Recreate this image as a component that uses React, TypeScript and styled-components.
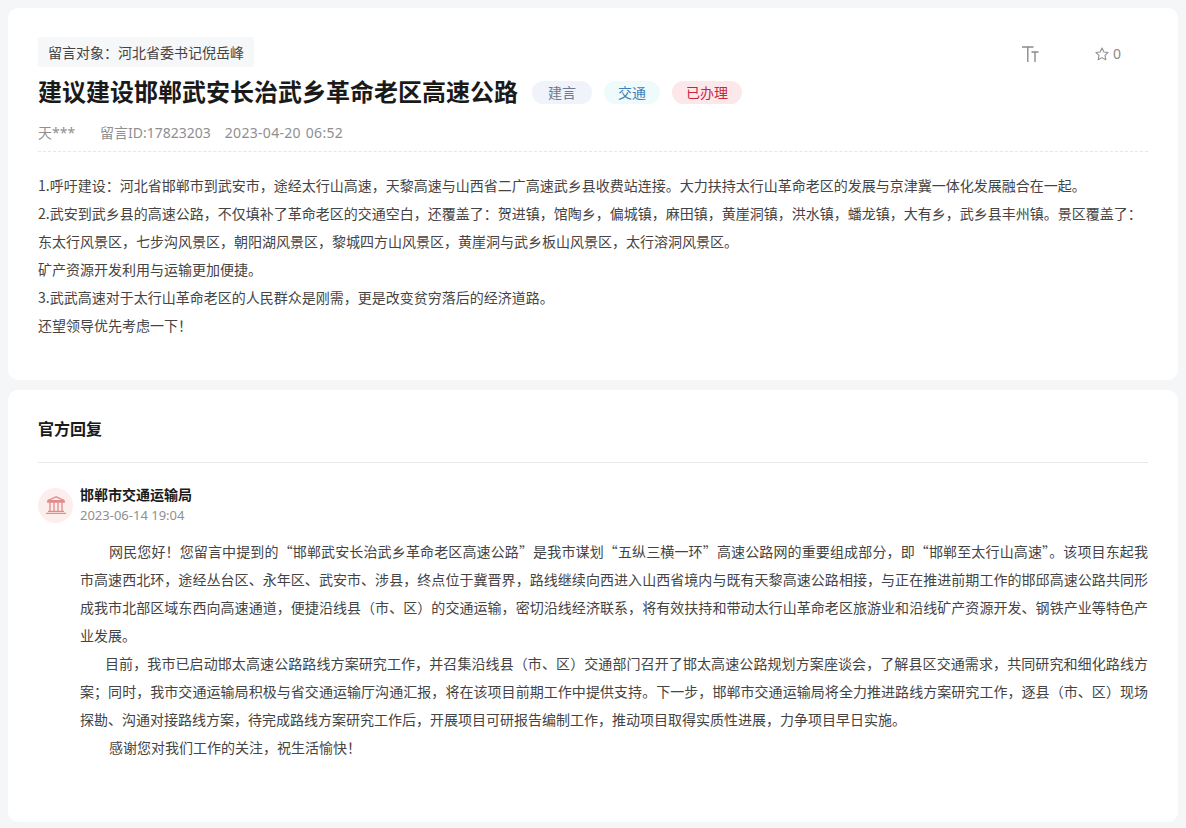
import React from "react";
import styled, { createGlobalStyle } from "styled-components";

const Global = createGlobalStyle`
  html, body { margin: 0; padding: 0; background: #f5f6f8; }
  body { font-family: "Noto Sans CJK SC", "Noto Sans", sans-serif; color: #333; }
`;
const Page = styled.div`
  width: 1170px; margin: 0 8px; padding-top: 8px;
  display: flex; flex-direction: column; gap: 10px;
`;
const Card = styled.section<{ $h: number }>`
  background: #fff; border-radius: 10px; height: ${p => p.$h}px;
  box-sizing: border-box; padding: 0 30px; overflow: hidden;
`;
const TopRow = styled.div`
  display: flex; justify-content: space-between; align-items: flex-start; padding-top: 29px;
`;
const Target = styled.div`
  background: #f6f7f9; border-radius: 2px; height: 30px; line-height: 30px; padding: 0 10px;
  font-size: 14px; color: #444; box-sizing: border-box;
`;
const Tools = styled.div`
  display: flex; align-items: center; height: 34px; color: #888;
`;
const FontTool = styled.svg`
  width: 18px; height: 16px; margin-right: 54px; margin-top: -1px;
`;
const Fav = styled.div`
  display: flex; align-items: center; gap: 3px; font-family: "Noto Sans", sans-serif;
  font-size: 14px; line-height: 20px; color: #888; margin-right: 27px;
`;
const TitleRow = styled.div`
  display: flex; align-items: center; margin-top: 2px; height: 38px;
`;
const Title = styled.h1`
  margin: 0 0 2px; font-size: 24px; font-weight: 700; color: #1a1a1a; line-height: 36px;
`;
const Tag = styled.span<{ $bg: string; $fg: string; $w: number; $ml: number }>`
  display: inline-flex; justify-content: center; align-items: center;
  width: ${p => p.$w}px; margin-left: ${p => p.$ml}px; height: 23px; border-radius: 12px;
  background: ${p => p.$bg}; color: ${p => p.$fg}; font-size: 14px; line-height: 23px;
`;
const Meta = styled.div`
  display: flex; margin-top: 10px; height: 31px; font-family: "Noto Sans", "Noto Sans CJK SC", sans-serif;
  font-size: 14px; line-height: 24px; color: #8f8f8f;
  border-bottom: 1px dashed #e6e6e6; box-sizing: border-box;
`;
const Author = styled.span` width: 62px; `;
const MetaDate = styled.span` margin-left: 14px; letter-spacing: 0.3px; word-spacing: 1px; `;
const Body = styled.div`
  margin-top: 19px; font-size: 14px; line-height: 28px; color: #444;
`;
const Line = styled.div` white-space: nowrap; `;
const ReplyHead = styled.h2`
  margin: 0; height: 72px; line-height: 77px; font-size: 16px; font-weight: 700; color: #1a1a1a;
  border-bottom: 1px solid #e8e8e8; box-sizing: content-box;
`;
const Org = styled.div`
  display: flex; gap: 7px; margin-top: 22px; align-items: center;
`;
const Avatar = styled.div`
  width: 35px; height: 35px; border-radius: 50%; background: #fdeeee;
  display: flex; align-items: center; justify-content: center;
`;
const OrgText = styled.div` display: flex; flex-direction: column; `;
const OrgName = styled.div`
  font-size: 14px; font-weight: 700; line-height: 18px; margin-bottom: 2px; color: #1a1a1a;
`;
const OrgDate = styled.div`
  font-family: "Noto Sans", sans-serif; font-size: 13px; line-height: 20px; color: #8f8f8f;
`;
const Reply = styled.div`
  margin: 12px 0 0 42px; font-size: 14px; line-height: 28px; color: #444;
`;
const Para = styled.p<{ $indent: number }>`
  margin: 0; text-indent: ${p => p.$indent}px; text-align: justify;
`;

export default function App() {
  return (
    <>
      <Global />
      <Page>
        <Card $h={372}>
          <TopRow>
            <Target>留言对象：河北省委书记倪岳峰</Target>
            <Tools>
              <FontTool viewBox="0 0 18 16" fill="none" stroke="#8a8a8a" strokeWidth="1.4">
                <path d="M0 1h11.5M5.8 1v15M9.5 6h7M13 6v10" />
              </FontTool>
              <Fav>
                <svg width="16" height="16" viewBox="0 0 24 24" fill="none" stroke="#8f8f8f" strokeWidth="1.6" strokeLinejoin="round">
                  <path d="M12 3l2.8 5.9 6.4.8-4.7 4.4 1.2 6.4L12 17.4l-5.7 3.1 1.2-6.4-4.7-4.4 6.4-.8z" />
                </svg>
                0
              </Fav>
            </Tools>
          </TopRow>
          <TitleRow>
            <Title>建议建设邯郸武安长治武乡革命老区高速公路</Title>
            <Tag $bg="#f0f3fa" $fg="#6b7a90" $w={60} $ml={14}>建言</Tag>
            <Tag $bg="#eefafb" $fg="#3f7fb5" $w={56} $ml={12}>交通</Tag>
            <Tag $bg="#fce8ea" $fg="#c8263f" $w={70} $ml={12}>已办理</Tag>
          </TitleRow>
          <Meta>
            <Author>天***</Author>
            <span>留言ID:17823203</span>
            <MetaDate>2023-04-20 06:52</MetaDate>
          </Meta>
          <Body>
            <Line>1.呼吁建设：河北省邯郸市到武安市，途经太行山高速，天黎高速与山西省二广高速武乡县收费站连接。大力扶持太行山革命老区的发展与京津冀一体化发展融合在一起。</Line>
            <Line>2.武安到武乡县的高速公路，不仅填补了革命老区的交通空白，还覆盖了：贺进镇，馆陶乡，偏城镇，麻田镇，黄崖洞镇，洪水镇，蟠龙镇，大有乡，武乡县丰州镇。景区覆盖了：</Line>
            <Line>东太行风景区，七步沟风景区，朝阳湖风景区，黎城四方山风景区，黄崖洞与武乡板山风景区，太行溶洞风景区。</Line>
            <Line>矿产资源开发利用与运输更加便捷。</Line>
            <Line>3.武武高速对于太行山革命老区的人民群众是刚需，更是改变贫穷落后的经济道路。</Line>
            <Line>还望领导优先考虑一下！</Line>
          </Body>
        </Card>
        <Card $h={432}>
          <ReplyHead>官方回复</ReplyHead>
          <Org>
            <Avatar>
              <svg width="20" height="18" viewBox="0 0 20 18" fill="none" stroke="#e28c8a" strokeWidth="1.3">
                <path d="M10 .8L1.5 4.6h17zM1 6h18M4 6v9M8 6v9M12 6v9M16 6v9M2 15.3h16M0 17.3h20" />
              </svg>
            </Avatar>
            <OrgText>
              <OrgName>邯郸市交通运输局</OrgName>
              <OrgDate>2023-06-14 19:04</OrgDate>
            </OrgText>
          </Org>
          <Reply>
            <Para $indent={29}>网民您好！您留言中提到的“邯郸武安长治武乡革命老区高速公路”是我市谋划“五纵三横一环”高速公路网的重要组成部分，即“邯郸至太行山高速”。该项目东起我市高速西北环，途经丛台区、永年区、武安市、涉县，终点位于冀晋界，路线继续向西进入山西省境内与既有天黎高速公路相接，与正在推进前期工作的邯邱高速公路共同形成我市北部区域东西向高速通道，便捷沿线县（市、区）的交通运输，密切沿线经济联系，将有效扶持和带动太行山革命老区旅游业和沿线矿产资源开发、钢铁产业等特色产业发展。</Para>
            <Para $indent={25}>目前，我市已启动邯太高速公路路线方案研究工作，并召集沿线县（市、区）交通部门召开了邯太高速公路规划方案座谈会，了解县区交通需求，共同研究和细化路线方案；同时，我市交通运输局积极与省交通运输厅沟通汇报，将在该项目前期工作中提供支持。下一步，邯郸市交通运输局将全力推进路线方案研究工作，逐县（市、区）现场探勘、沟通对接路线方案，待完成路线方案研究工作后，开展项目可研报告编制工作，推动项目取得实质性进展，力争项目早日实施。</Para>
            <Para $indent={29}>感谢您对我们工作的关注，祝生活愉快！</Para>
          </Reply>
        </Card>
      </Page>
    </>
  );
}
